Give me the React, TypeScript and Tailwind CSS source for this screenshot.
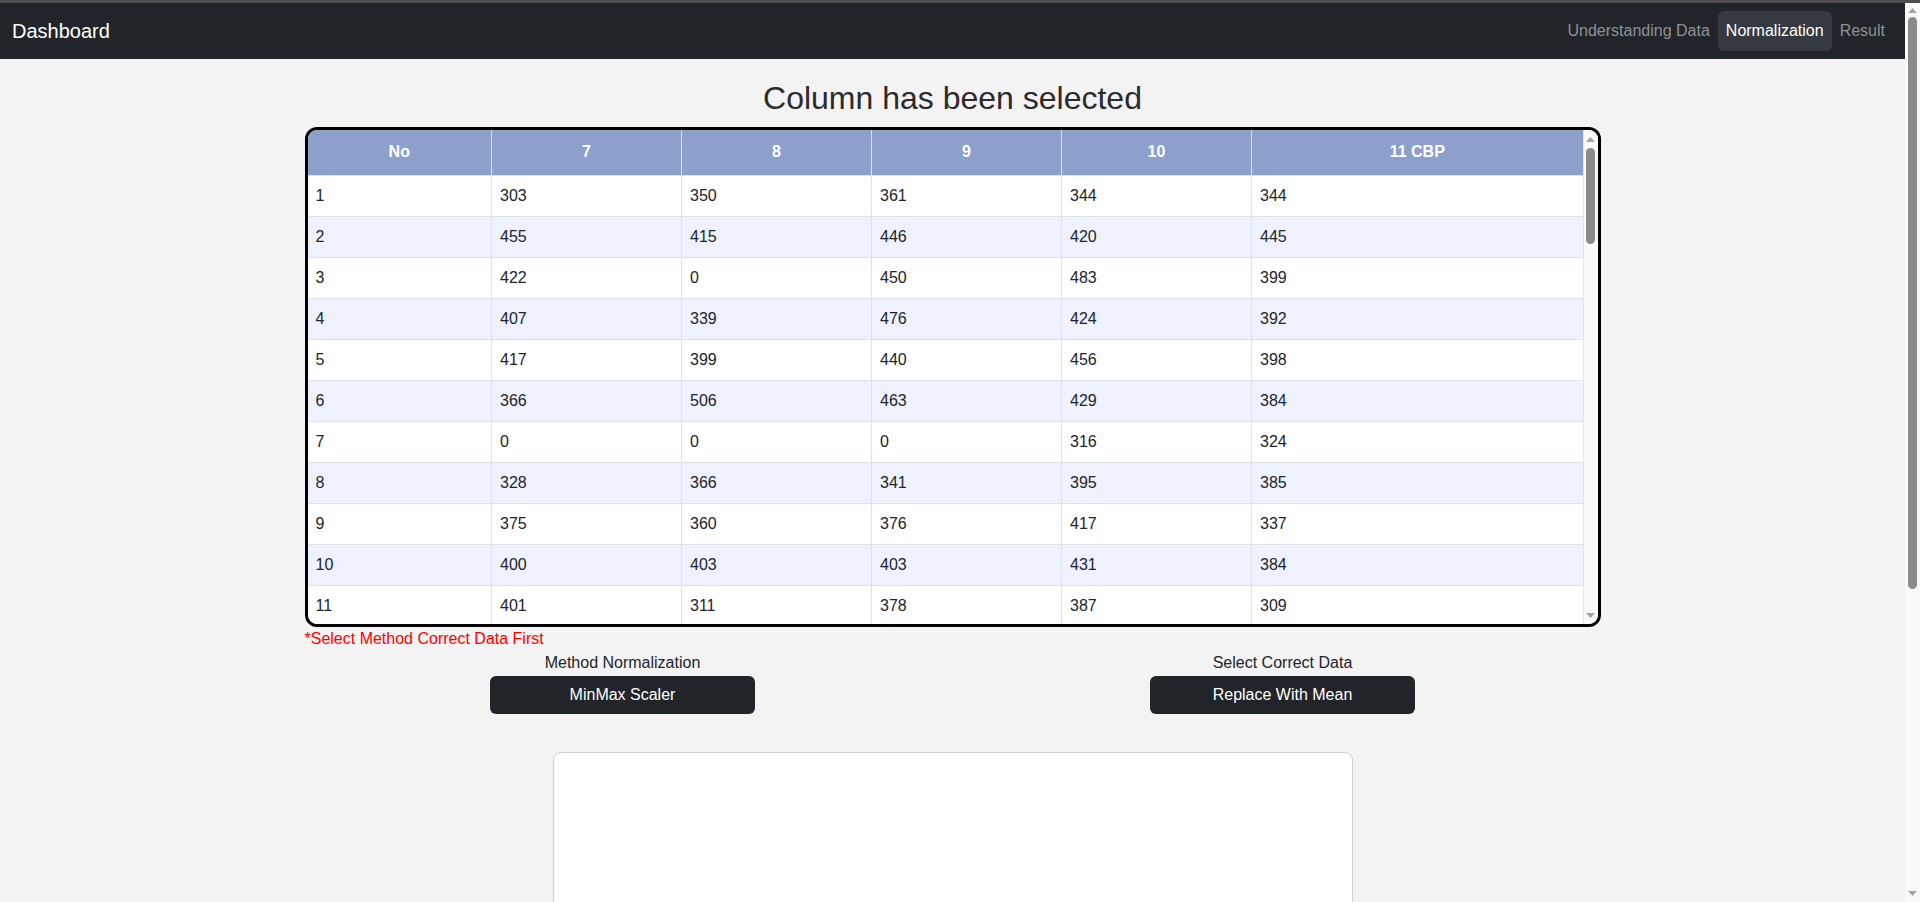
import React from "react"

const navLinks = [
  { name: "Understanding Data", active: false },
  { name: "Normalization", active: true },
  { name: "Result", active: false },
]

const rows = [
  [303, 350, 361, 344, 344],
  [455, 415, 446, 420, 445],
  [422, 0, 450, 483, 399],
  [407, 339, 476, 424, 392],
  [417, 399, 440, 456, 398],
  [366, 506, 463, 429, 384],
  [0, 0, 0, 316, 324],
  [328, 366, 341, 395, 385],
  [375, 360, 376, 417, 337],
  [400, 403, 403, 431, 384],
  [401, 311, 378, 387, 309],
]

const columns = ["No", "7", "8", "9", "10", "11 CBP"]

function Arrow({ up }: { up?: boolean }) {
  return (
    <svg width="9" height="5" viewBox="0 0 9 5" className="fill-[#a3a3a3]">
      <polygon points={up ? "0,5 9,5 4.5,0" : "0,0 9,0 4.5,5"} />
    </svg>
  )
}

// classic scrollbar look: arrows top/bottom, rounded grey thumb
function ScrollTrack({ thumbTop, thumbHeight }: { thumbTop: string; thumbHeight: string }) {
  return (
    <div className="w-[15px] shrink-0 bg-[#fafafa] flex flex-col items-center">
      <div className="pt-[5px]">
        <Arrow up />
      </div>
      <div className={`w-[9px] rounded-full bg-[#8a8a8a] ${thumbTop} ${thumbHeight}`} />
      <div className="mt-auto pb-[6px]">
        <Arrow />
      </div>
    </div>
  )
}

export default function App() {
  return (
    <div className="h-[902px] overflow-hidden flex flex-col bg-[#f3f3f3] font-['Liberation_Sans',Arial,sans-serif] text-[#212529]">
      <div className="h-[3px] shrink-0 bg-[#4d4d4d]" />
      <div className="flex flex-1 min-h-0">
        <div className="w-[1905px] overflow-hidden">
          <nav className="h-14 bg-[#212529] flex items-center justify-between px-3">
            <span className="text-white text-xl">Dashboard</span>
            <ul className="flex items-center">
              {navLinks.map((link) => (
                <li key={link.name}>
                  <a
                    className={
                      link.active
                        ? "block px-2 leading-10 rounded-md bg-[#343a40] text-white"
                        : "block px-2 leading-10 text-[#8f9194]"
                    }
                  >
                    {link.name}
                  </a>
                </li>
              ))}
            </ul>
          </nav>

          <main className="w-[1296px] mx-auto">
            <h2 className="text-center text-[32px] leading-[38px] mt-5 mb-[10px] text-[#2b2b2b]">
              Column has been selected
            </h2>

            <div className="h-[500px] border-[3px] border-black rounded-[12px] overflow-hidden bg-white flex">
              <div className="flex-1 overflow-hidden">
                <table className="w-full table-fixed border-collapse">
                  <colgroup>
                    <col className="w-[184px]" />
                    <col className="w-[190px]" />
                    <col className="w-[190px]" />
                    <col className="w-[190px]" />
                    <col className="w-[190px]" />
                    <col />
                  </colgroup>
                  <thead>
                    <tr className="bg-[#8da0cb] text-white h-[45px]">
                      {columns.map((col) => (
                        <th key={col} className="font-bold border-x border-[#dee2e6] first:border-l-0 last:border-r-0 text-center">
                          {col}
                        </th>
                      ))}
                    </tr>
                  </thead>
                  <tbody>
                    {rows.map((row, i) => (
                      <tr key={i} className={i % 2 === 0 ? "bg-white h-[41px]" : "bg-[#eef2fd] h-[41px]"}>
                        <td className="px-2 border border-[#dee2e6] border-l-0">{i + 1}</td>
                        {row.map((v, j) => (
                          <td key={j} className="px-2 border border-[#dee2e6] last:border-r-0">
                            {v}
                          </td>
                        ))}
                      </tr>
                    ))}
                  </tbody>
                </table>
              </div>
              <div className="w-[15px] shrink-0 bg-[#fafafa] flex flex-col items-center border-l border-[#e5e5e5]">
                <div className="pt-[7px]">
                  <Arrow up />
                </div>
                <div className="mt-[6px] w-[9px] h-[96px] rounded-full bg-[#8a8a8a]" />
                <div className="mt-auto pb-[6px]">
                  <Arrow />
                </div>
              </div>
            </div>

            <p className="text-[#ff0000] leading-6">*Select Method Correct Data First</p>

            <div className="flex justify-center gap-[395px]">
              <div className="flex flex-col items-center w-[265px]">
                <span className="leading-6">Method Normalization</span>
                <button className="mt-[1px] w-[265px] h-[38px] rounded-md bg-[#212529] text-white">
                  MinMax Scaler
                </button>
              </div>
              <div className="flex flex-col items-center w-[265px]">
                <span className="leading-6">Select Correct Data</span>
                <button className="mt-[1px] w-[265px] h-[38px] rounded-md bg-[#212529] text-white">
                  Replace With Mean
                </button>
              </div>
            </div>

            <div className="w-[800px] h-[560px] mx-auto mt-[38px] mb-[57px] bg-white border border-[#cfcfcf] rounded-lg" />
          </main>
        </div>
        <ScrollTrack thumbTop="mt-[4px]" thumbHeight="h-[572px]" />
      </div>
    </div>
  )
}
